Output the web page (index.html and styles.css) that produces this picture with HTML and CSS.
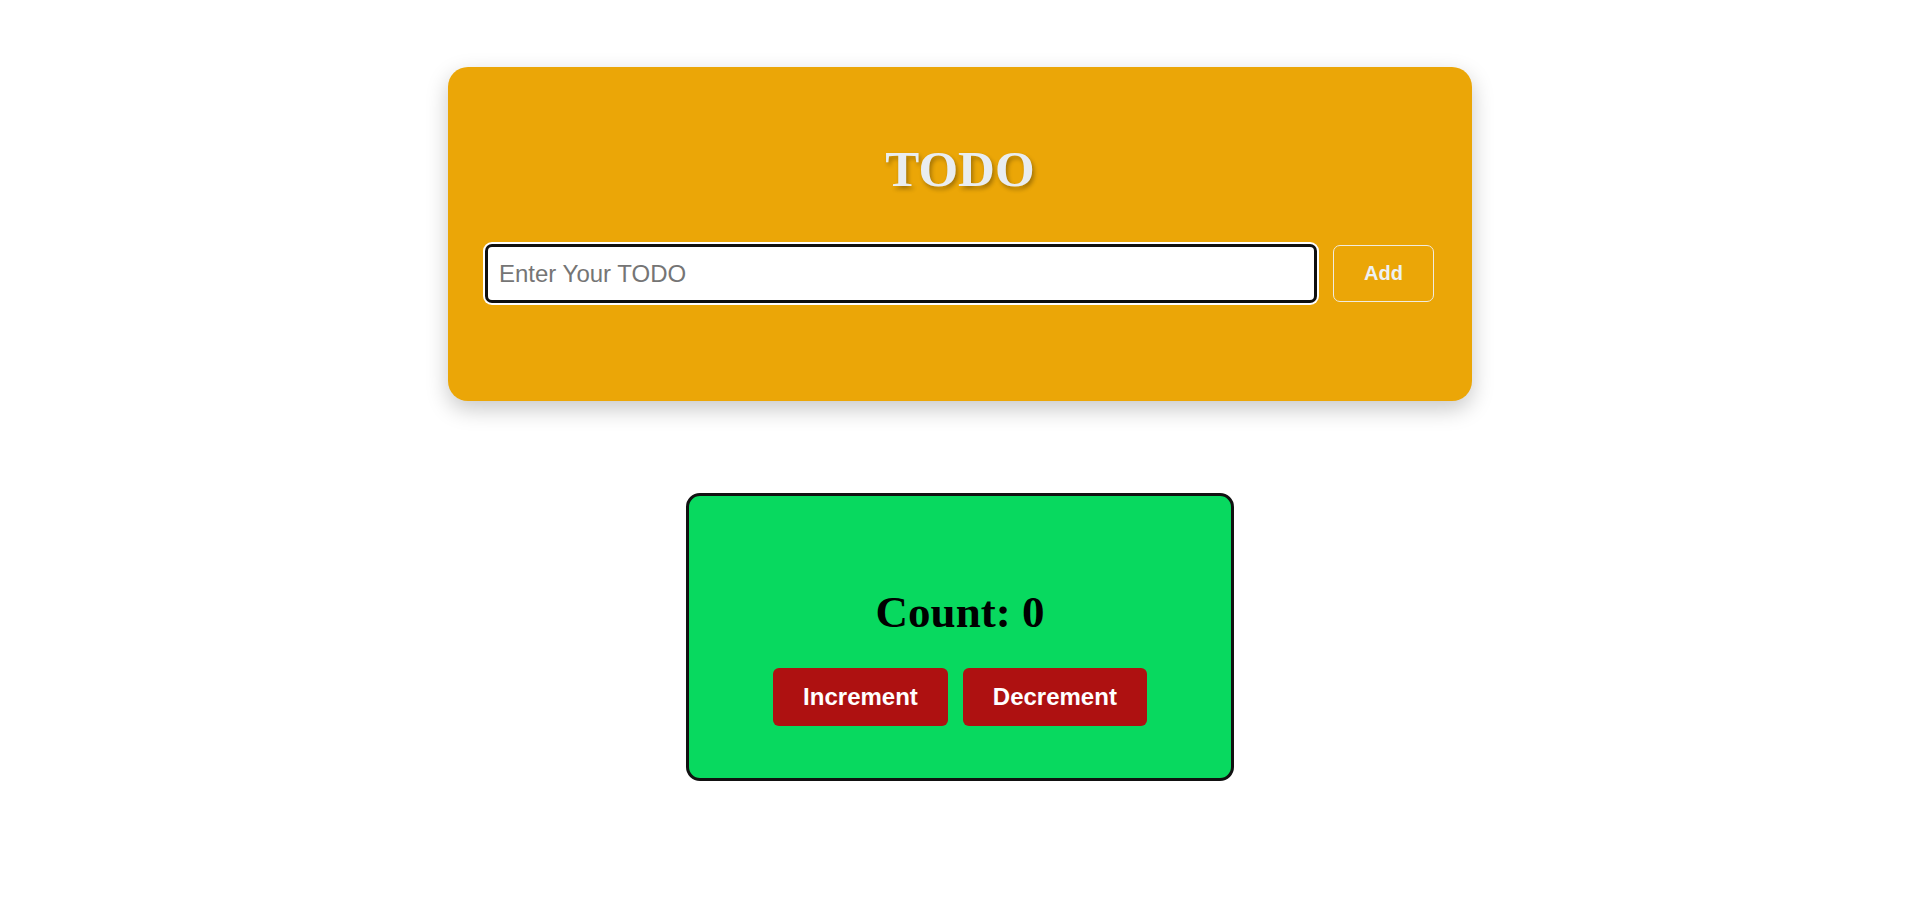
FILE: index.html
```html
<!DOCTYPE html>
<html lang="en">
<head>
<meta charset="utf-8">
<title>TODO</title>
<link rel="stylesheet" href="styles.css">
</head>
<body>
  <main class="page">
    <section class="todo-card">
      <h1 class="todo-title">TODO</h1>
      <div class="todo-row">
        <input class="todo-input" type="text" placeholder="Enter Your TODO">
        <button class="add-btn" type="button">Add</button>
      </div>
    </section>
    <section class="counter-card">
      <h2 class="count-text">Count: 0</h2>
      <div class="counter-actions">
        <button class="counter-btn" type="button">Increment</button>
        <button class="counter-btn" type="button">Decrement</button>
      </div>
    </section>
  </main>
</body>
</html>
```

FILE: styles.css
```css
html, body {
  margin: 0;
  padding: 0;
  background: #ffffff;
}

.page {
  display: flex;
  flex-direction: column;
  align-items: center;
  padding-top: 67px;
}

.todo-card {
  box-sizing: border-box;
  width: 1024px;
  background: #eba607;
  border-radius: 20px;
  padding: 39px 38px 99px;
  box-shadow: 0 8px 22px rgba(0, 0, 0, 0.22);
}

.todo-title {
  margin: 34px 0 47px;
  text-align: center;
  font-family: "Liberation Serif", "Times New Roman", serif;
  font-weight: 700;
  font-size: 51px;
  line-height: normal;
  color: #e9edf0;
  text-shadow: 2px 3px 4px rgba(0, 0, 0, 0.3);
}

.todo-row {
  display: flex;
  align-items: center;
  gap: 17px;
}

.todo-input {
  box-sizing: border-box;
  flex: 1;
  height: 57px;
  margin: 0;
  padding: 0 11px;
  border: 2px solid #101010;
  border-radius: 6px;
  background: #ffffff;
  font-family: "Liberation Sans", Arial, sans-serif;
  font-size: 24px;
  color: #222;
  outline: none;
  box-shadow: 0 0 0 1px #101010, 0 0 0 3px #ffffff;
}

.todo-input::placeholder {
  color: #757575;
}

.add-btn {
  box-sizing: border-box;
  width: 101px;
  height: 57px;
  margin: 0;
  padding: 0;
  background: transparent;
  border: 1px solid #f0ece0;
  border-radius: 7px;
  font-family: "Liberation Sans", Arial, sans-serif;
  font-weight: 700;
  font-size: 20px;
  color: #eef1f3;
}

.counter-card {
  box-sizing: border-box;
  width: 548px;
  margin-top: 92px;
  background: #08d95f;
  border: 3px solid #111111;
  border-radius: 14px;
  padding: 90px 0 52px;
  display: flex;
  flex-direction: column;
  align-items: center;
}

.count-text {
  margin: 0 0 30px;
  font-family: "Liberation Serif", "Times New Roman", serif;
  font-weight: 700;
  font-size: 45px;
  line-height: normal;
  color: #000000;
}

.counter-actions {
  display: flex;
  gap: 15px;
}

.counter-btn {
  margin: 0;
  padding: 15px 30px;
  background: #ae1111;
  color: #ffffff;
  border: none;
  border-radius: 6px;
  font-family: "Liberation Sans", Arial, sans-serif;
  font-weight: 700;
  font-size: 24px;
  line-height: normal;
}
```
